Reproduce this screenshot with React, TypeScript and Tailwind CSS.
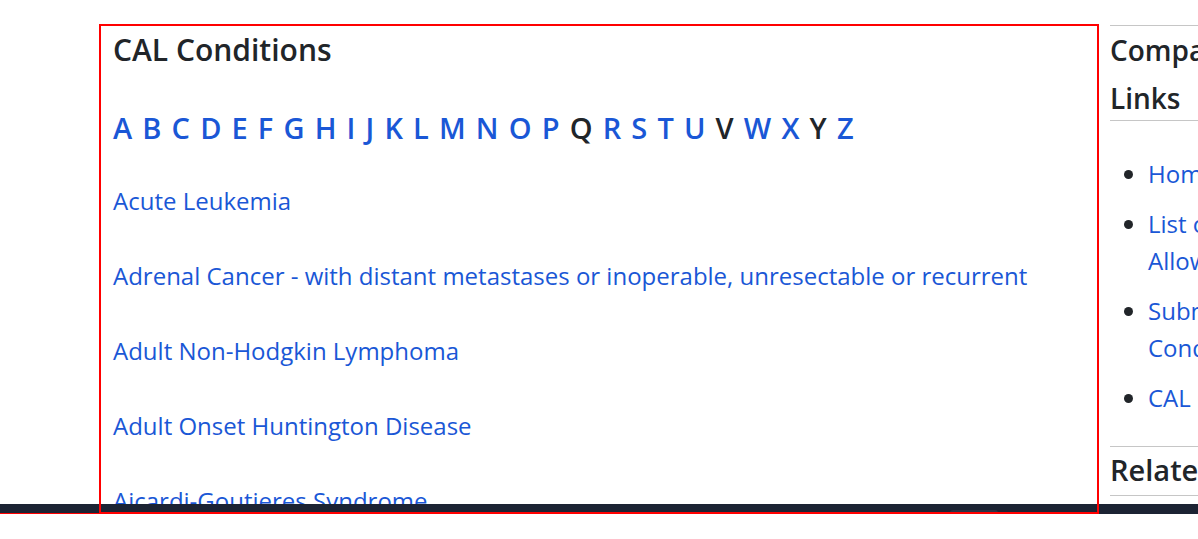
const letters = "ABCDEFGHIJKLMNOPQRSTUVWXYZ".split("");
const inactive = new Set(["Q", "V", "Y"]);

const conditions = [
  "Acute Leukemia",
  "Adrenal Cancer - with distant metastases or inoperable, unresectable or recurrent",
  "Adult Non-Hodgkin Lymphoma",
  "Adult Onset Huntington Disease",
  "Aicardi-Goutieres Syndrome",
  "Alexander Disease (ALX) - Neonatal and Infantile",
];

export default function App() {
  return (
    <div className="relative w-[1198px] h-[539px] overflow-hidden bg-white font-['Open_Sans',sans-serif] text-[#212529]">
      <div className="h-[513px] overflow-hidden flex items-start pl-[99px] pt-[24px] gap-[12px]">
        <main className="w-[999px] shrink-0 h-[600px] p-[2px] px-[14px]">
          <h2 className="mt-[6px] text-[30px] leading-[35px] font-semibold text-[#212529]">
            CAL Conditions
          </h2>
          <div className="mt-[45px] text-[29px] leading-[32px] font-semibold [word-spacing:2.6px]">
            {letters.map((l, i) => (
              <span key={l}>
                {inactive.has(l) ? (
                  <span className="text-[#212529]">{l}</span>
                ) : (
                  <a href="#" className="text-[#1a57d6]">
                    {l}
                  </a>
                )}
                {i < letters.length - 1 ? " " : ""}
              </span>
            ))}
          </div>
          <div className="mt-[40px]">
            {conditions.map((c) => (
              <p key={c} className="text-[24px] leading-[33px] mb-[42px]">
                <a href="#" className="text-[#1a57d6]">
                  {c}
                </a>
              </p>
            ))}
          </div>
        </main>
        <aside className="w-[380px] shrink-0 mt-[1px]">
          <div className="border-t border-b border-[#c6c6c6]">
            <h2 className="text-[28px] leading-[48px] font-semibold -mb-[2px]">
              Compassionate Allowances Links
            </h2>
          </div>
          <ul className="list-disc pl-[38px] mt-[34px] text-[24px] leading-[37px]">
            <li className="mb-[13px]">
              <a href="#" className="text-[#1a57d6]">Home</a>
            </li>
            <li className="mb-[13px]">
              <a href="#" className="text-[#1a57d6]">
                List of Compassionate
                <br />
                Allowances Conditions
              </a>
            </li>
            <li className="mb-[13px]">
              <a href="#" className="text-[#1a57d6]">
                Submit a Suggested
                <br />
                Condition
              </a>
            </li>
            <li>
              <a href="#" className="text-[#1a57d6]">CAL Conditions</a>
            </li>
          </ul>
          <div className="mt-[30px] border-t border-b border-[#c6c6c6] pt-[5px] pb-[8px]">
            <h2 className="text-[29px] leading-[35px] font-semibold">Related Links</h2>
          </div>
        </aside>
      </div>
      <div className="absolute left-0 right-0 top-[504px] h-[10px] bg-[#1c2333]">
        <div className="absolute left-[950px] top-[6px] w-[48px] h-[3px] rounded-t-[3px] bg-[#2a3345]" />
      </div>
      <div className="absolute left-0 top-[513px] w-[1098px] h-[1px] bg-[#ff0000]" />
      <div className="pointer-events-none absolute left-[99px] top-[24px] w-[1000px] h-[490px] border-2 border-[#ff0000]" />
    </div>
  );
}
